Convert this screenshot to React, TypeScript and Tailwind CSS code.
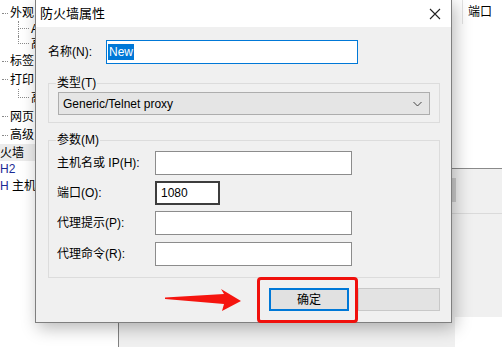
import React from 'react';

const font = "font-['Liberation_Sans','Noto_Sans_CJK_SC',sans-serif]";

type TreeRow = {
  text: React.ReactNode;
  kind: 'root' | 'child' | 'lastChild' | 'plain';
  h: string;
  active?: boolean;
};

const tree: TreeRow[] = [
  { text: '外观', kind: 'root', h: 'h-[16px]' },
  { text: 'A', kind: 'child', h: 'h-[15px]' },
  { text: '高', kind: 'lastChild', h: 'h-[16px]' },
  { text: '标签', kind: 'root', h: 'h-[18px]' },
  { text: '打印', kind: 'root', h: 'h-[19px]' },
  { text: '高', kind: 'lastChild', h: 'h-[18px]' },
  { text: '网页', kind: 'root', h: 'h-[19px]' },
  { text: '高级', kind: 'root', h: 'h-[18px]' },
  { text: '火墙', kind: 'plain', h: 'h-[17px]', active: true },
  { text: <span className="text-[#1b2a94]">H2</span>, kind: 'plain', h: 'h-[16px]' },
  {
    text: (
      <span>
        <span className="text-[#1b2a94]">H</span> 主机
      </span>
    ),
    kind: 'plain',
    h: 'h-[17px]',
  },
];

function TreePanel() {
  return (
    <div className="w-[119px] shrink-0 border-r border-[#828282] bg-white pt-[5px] text-[12px] text-black">
      {tree.map((row, i) => (
        <div key={i} className={`flex items-stretch ${row.h} ${row.active ? 'bg-[#ebebeb]' : ''}`}>
          {row.kind === 'root' && (
            <div className="flex items-center">
              <div className="ml-[2px] w-[6px] border-t border-dotted border-[#8a8a8a]" />
              <span className="ml-[2px] leading-none">{row.text}</span>
            </div>
          )}
          {(row.kind === 'child' || row.kind === 'lastChild') && (
            <>
              <div className="w-[18px]" />
              <div className="flex w-[11px] flex-col">
                <div className="h-1/2 border-b border-l border-dotted border-[#8a8a8a]" />
                <div className={`flex-1 ${row.kind === 'child' ? 'border-l border-dotted border-[#8a8a8a]' : ''}`} />
              </div>
              <span className="ml-[2px] flex items-center leading-none">{row.text}</span>
            </>
          )}
          {row.kind === 'plain' && <span className="flex items-center leading-none">{row.text}</span>}
        </div>
      ))}
    </div>
  );
}

function RightPanel() {
  return (
    <div className="flex flex-1 flex-col">
      <div className="h-[169px] border-b border-[#8a8a8a] bg-white">
        <div className="ml-[343px] flex h-[24px] items-center border-l border-[#e3e3e3] pl-[5px] text-[12px] text-black">
          端口
        </div>
      </div>
      <div className="flex flex-1 flex-col bg-[#f0f0f0] pt-[9px]">
        <div className="ml-[333px] h-[24px] w-[4px] bg-[#cdcdcd]" />
        <div className="mt-[11px] flex-1 border-t border-[#dadada]" />
        <div className="flex h-[30px]">
          <div className="w-[336px]" />
          <div className="flex-1 bg-white" />
        </div>
      </div>
    </div>
  );
}

function TextBox({ width, children, strong }: { width: string; children?: React.ReactNode; strong?: boolean }) {
  return (
    <div
      className={`flex h-[24px] ${width} items-center bg-white pl-[4px] text-[12px] text-black ${
        strong ? 'border-2 border-[#3d3d3d]' : 'border border-[#8c8c8c]'
      }`}
    >
      {children}
    </div>
  );
}

const params = [
  { label: <>主机名或 IP(H):</>, width: 'w-[197px]' },
  { label: <>端口(O):</>, width: 'w-[65px]', value: '1080', strong: true },
  { label: <>代理提示(P):</>, width: 'w-[197px]' },
  { label: <>代理命令(R):</>, width: 'w-[197px]', extra: 'mt-[1px]' },
];

function Dialog() {
  return (
    <div className="absolute left-[35px] top-[-1px] flex h-[324px] w-[417px] flex-col border border-[#7f7f7f] bg-[#f0f0f0] shadow-[3px_5px_16px_rgba(0,0,0,0.28)]">
      <div className="flex h-[27px] items-center justify-between bg-white pl-[4px] pr-[10px]">
        <span className="text-[13px] text-black">防火墙属性</span>
        <svg width="12" height="12" viewBox="0 0 12 12" className="text-[#222]">
          <path d="M1 1 L11 11 M11 1 L1 11" stroke="currentColor" strokeWidth="1.1" fill="none" />
        </svg>
      </div>

      <div className="flex flex-1 flex-col pl-[12px] pr-[11px] pt-[13px] text-[12px] text-black">
        {/* name */}
        <div className="flex h-[24px] items-center">
          <span className="w-[58px]">名称(N):</span>
          <div className="flex h-[24px] w-[252px] items-center border border-[#0078d7] bg-white pl-[1px]">
            <span className="bg-[#0078d7] px-[1px] leading-[16px] text-white">New</span>
          </div>
        </div>

        {/* type */}
        <fieldset className="mt-[11px] border border-[#dcdcdc] pb-[7px]">
          <legend className="ml-[7px] px-[1px] leading-[16px]">类型(T)</legend>
          <div className="mx-[9px] mt-[1px] flex h-[23px] items-center justify-between border border-[#adadad] bg-[#e5e5e5] pl-[4px] pr-[7px]">
            <span>Generic/Telnet proxy</span>
            <svg width="9" height="6" viewBox="0 0 9 6">
              <polyline points="0.5,1 4.5,5 8.5,1" stroke="#444" strokeWidth="1" fill="none" />
            </svg>
          </div>
        </fieldset>

        {/* params */}
        <fieldset className="mt-[9px] border border-[#dcdcdc] pb-[11px]">
          <legend className="ml-[7px] px-[1px] leading-[16px]">参数(M)</legend>
          <div className="mt-[3px] flex flex-col gap-[6px] pl-[8px]">
            {params.map((p, i) => (
              <div key={i} className={`flex h-[24px] items-center ${p.extra ?? ''}`}>
                <span className="w-[98px]">{p.label}</span>
                <TextBox width={p.width} strong={p.strong}>
                  {p.value}
                </TextBox>
              </div>
            ))}
          </div>
        </fieldset>

        {/* buttons */}
        <div className="mt-[10px] flex justify-end gap-[9px]">
          <div className="flex h-[23px] w-[80px] items-center justify-center border-2 border-[#0078d7] bg-[#e1e1e1]">
            确定
          </div>
          <div className="h-[23px] w-[82px] border border-[#c8c8c8] bg-[#e3e3e3]" />
        </div>
      </div>
    </div>
  );
}

export default function App() {
  return (
    <div className={`relative h-[347px] w-[502px] overflow-hidden bg-white ${font}`}>
      <div className="flex h-full">
        <TreePanel />
        <RightPanel />
      </div>

      <Dialog />

      {/* annotation: arrow + red box */}
      <svg className="absolute left-[160px] top-[286px]" width="85" height="28" viewBox="0 0 85 28">
        <polygon points="5,11.5 64,8 61,3 81,15 62,25 64,18 5,13" fill="#f5150f" />
      </svg>
      <div className="absolute left-[257px] top-[277px] h-[46px] w-[101px] rounded-[4px] border-[3px] border-[#f0100c]" />
    </div>
  );
}
